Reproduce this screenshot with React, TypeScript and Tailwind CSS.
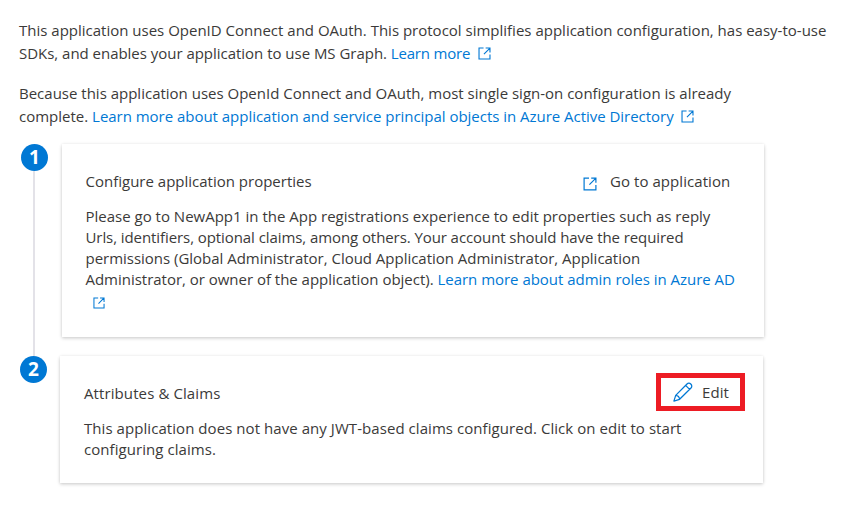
import type { ReactNode } from "react";

function ExternalLink({ className }: { className: string }) {
  return (
    <svg viewBox="0 0 14 14" fill="none" stroke="#0078d4" strokeWidth="1.2" className={className}>
      <path d="M6 1.1H1.1v11.8h11.8V8M8.2 1.1h4.7v4.7M12.9 1.1L6.4 7.6" />
    </svg>
  );
}

function Pencil() {
  return (
    <svg viewBox="0 0 20 20" fill="none" stroke="#0078d4" strokeWidth="1.25" strokeLinejoin="round" className="h-5 w-5 shrink-0">
      <path d="M.9 19.1l1.8-5.7L14 2a2.6 2.6 0 0 1 3.7 0l.3.3a2.6 2.6 0 0 1 0 3.7L6.6 17.3.9 19.1zM12.6 3.4l4 4M2.7 13.4c2 .2 3.7 1.9 3.9 3.9" />
    </svg>
  );
}

function Line({ className, children }: { className: string; children: ReactNode }) {
  return <span className={`flex items-center whitespace-pre ${className}`}>{children}</span>;
}

function Step({ n, className }: { n: number; className: string }) {
  return (
    <div className={`flex h-[27px] w-[27px] items-center justify-center rounded-full bg-[#0078d4] text-[19px] leading-none font-bold text-white ${className}`}>
      {n}
    </div>
  );
}

const card = "bg-white shadow-[0_1.6px_3.6px_rgba(0,0,0,0.16),0_0_3px_rgba(0,0,0,0.1)]";

export default function App() {
  return (
    <main className="h-[518px] w-[865px] overflow-hidden bg-white pt-[19px] font-['Open_Sans',sans-serif] text-[15px] text-[#3b3a39]">
      <p className="ml-[19px] leading-[23px]">
        <Line className="h-[23px]">This application uses OpenID Connect and OAuth. This protocol simplifies application configuration, has easy-to-use</Line>
        <Line className="h-[23px]">
          <span className="tracking-[-0.025px]">SDKs, and enables your application to use MS Graph. </span>
          <a className="flex items-center tracking-[-0.2px] text-[#0078d4]">Learn more<ExternalLink className="ml-2 h-[13px] w-[13px]" /></a>
        </Line>
      </p>
      <p className="mt-[17px] ml-[19px] leading-[23px]">
        <Line className="h-[23px]">Because this application uses OpenId Connect and OAuth, most single sign-on configuration is already</Line>
        <Line className="h-[23px]">
          <span>complete. </span>
          <a className="flex items-center tracking-[-0.027px] text-[#0078d4]">Learn more about application and service principal objects in Azure Active Directory<ExternalLink className="ml-[7px] h-[13px] w-[13px]" /></a>
        </Line>
      </p>

      <div className="mt-4 flex h-[212px]">
        <div className="ml-[21px] flex w-[27px] flex-col">
          <Step n={1} className="" />
          <div className="ml-3 w-[2px] flex-1 bg-[#e3e2e8]" />
        </div>
        <section className={`ml-[14px] h-[193px] w-[702px] pt-[27px] pl-[23.5px] ${card}`}>
          <div className="flex h-[21px] items-center whitespace-pre">
            <h2 className="w-[497.5px]">Configure application properties</h2>
            <ExternalLink className="mt-1 h-[14px] w-[14px]" />
            <span className="-mt-px ml-[13px] tracking-[0.06px]">Go to application</span>
          </div>
          <p className="mt-[14px] leading-[21px]">
            <Line className="h-[21px]">Please go to NewApp1 in the App registrations experience to edit properties such as reply</Line>
            <Line className="h-[21px] tracking-[-0.08px]">Urls, identifiers, optional claims, among others. Your account should have the required</Line>
            <Line className="h-[21px] tracking-[-0.02px]">permissions (Global Administrator, Cloud Application Administrator, Application</Line>
            <Line className="h-[21px] tracking-[-0.02px]">
              <span>Administrator, or owner of the application object). </span>
              <a className="text-[#0078d4]">Learn more about admin roles in Azure AD</a>
            </Line>
            <ExternalLink className="mt-[7px] ml-[7.5px] h-[12px] w-[12px]" />
          </p>
        </section>
      </div>

      <div className="flex">
        <Step n={2} className="ml-5" />
        <section className={`ml-[13px] h-[127px] w-[703px] pt-[17px] pl-[24px] ${card}`}>
          <div className="flex h-[38px] items-center">
            <h2 className="w-[572px] pt-[2px] tracking-[0.1px]">Attributes &amp; Claims</h2>
            <button className="flex h-[38px] w-[89px] items-center border-[5px] border-[#ed1c24] pl-3">
              <Pencil />
              <span className="ml-[9px] tracking-[0.1px]">Edit</span>
            </button>
          </div>
          <p className="mt-[7px] leading-[21px] tracking-[0.06px]">
            <Line className="h-[21px]">This application does not have any JWT-based claims configured. Click on edit to start</Line>
            <Line className="h-[21px]">configuring claims.</Line>
          </p>
        </section>
      </div>
    </main>
  );
}
